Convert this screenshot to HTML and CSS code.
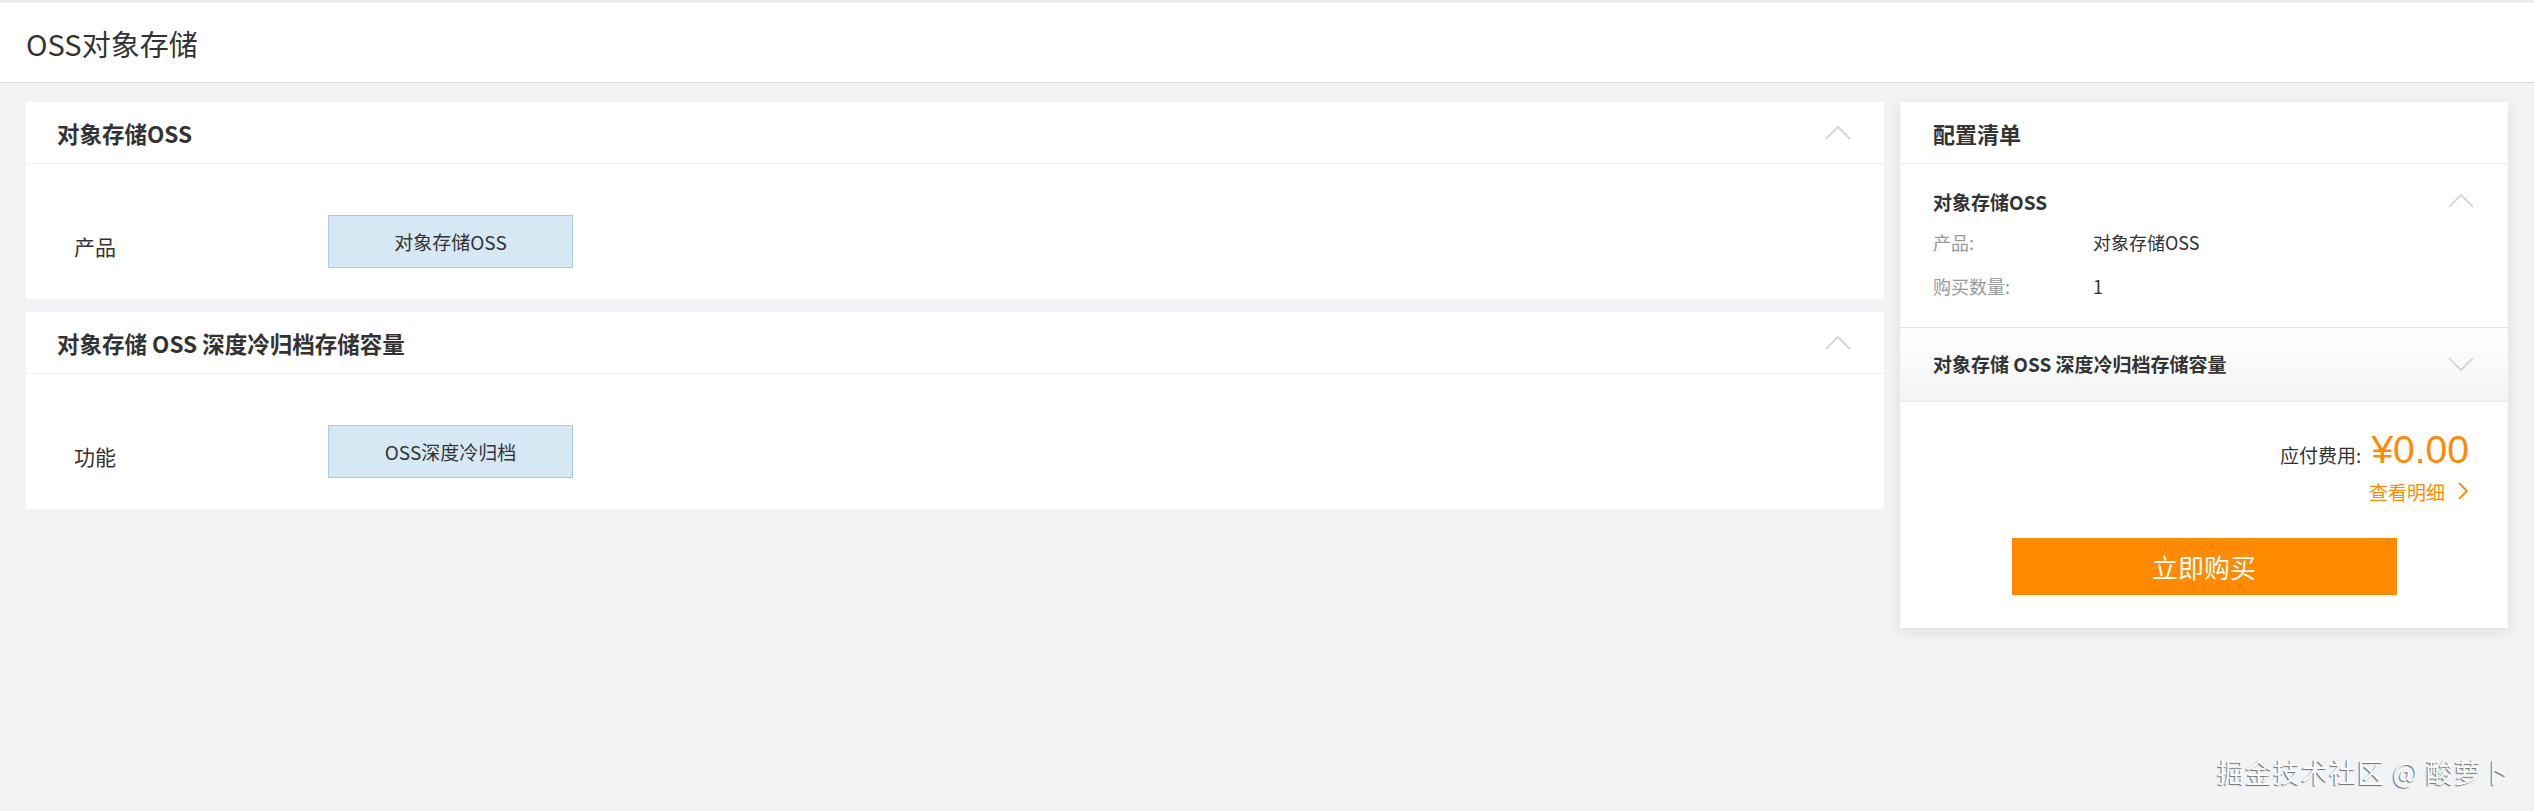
FILE: index.html
```html
<!DOCTYPE html>
<html lang="zh-CN">
<head>
  <meta charset="UTF-8" />
  <title>OSS对象存储</title>
  <link rel="stylesheet" href="styles.css">
</head>
<body>
  <header class="page-header">
    <h1>OSS对象存储</h1>
  </header>

  <div class="main">
    <div class="config">
      <section class="card">
        <div class="card-head">
          <h2>对象存储OSS</h2>
          <svg class="chevron" width="28" height="16" viewBox="0 0 28 16"><polyline points="2,14 14,2 26,14" /></svg>
        </div>
        <div class="card-body">
          <div class="field">
            <span class="field-label">产品</span>
            <span class="chip">对象存储OSS</span>
          </div>
        </div>
      </section>

      <section class="card">
        <div class="card-head">
          <h2>对象存储 OSS 深度冷归档存储容量</h2>
          <svg class="chevron" width="28" height="16" viewBox="0 0 28 16"><polyline points="2,14 14,2 26,14" /></svg>
        </div>
        <div class="card-body">
          <div class="field">
            <span class="field-label">功能</span>
            <span class="chip">OSS深度冷归档</span>
          </div>
        </div>
      </section>
    </div>

    <aside class="summary">
      <div class="summary-head">配置清单</div>

      <div class="summary-item">
        <div class="item-title">
          <span>对象存储OSS</span>
          <svg class="chevron" width="28" height="16" viewBox="0 0 28 16"><polyline points="2,14 14,2 26,14" /></svg>
        </div>
        <div class="item-row"><span class="row-label">产品:</span><span>对象存储OSS</span></div>
        <div class="item-row"><span class="row-label">购买数量:</span><span>1</span></div>
      </div>

      <div class="summary-item collapsed">
        <div class="item-title">
          <span>对象存储 OSS 深度冷归档存储容量</span>
          <svg class="chevron" width="28" height="16" viewBox="0 0 28 16"><polyline points="2,2 14,14 26,2" /></svg>
        </div>
      </div>

      <div class="summary-foot">
        <div class="price-line">
          <span class="price-label">应付费用:</span>
          <span class="price">¥0.00</span>
        </div>
        <a class="detail-link" href="#">查看明细
          <svg width="12" height="20" viewBox="0 0 12 20"><polyline points="2,2 10,10 2,18" /></svg>
        </a>
        <button class="buy-btn">立即购买</button>
      </div>
    </aside>
  </div>

  <div class="watermark">掘金技术社区 @ 酸萝卜</div>
</body>
</html>
```

FILE: styles.css
```css
* {
  margin: 0;
  padding: 0;
  box-sizing: border-box;
}

html, body {
  height: 100%;
}

body {
  position: relative;
  background: #f2f3f5;
  color: #333;
  font-family: "Noto Sans CJK SC", "Liberation Sans", sans-serif;
  border-top: 3px solid #ececec;
}

.page-header {
  height: 80px;
  background: #fff;
  border-bottom: 1px solid #dcdee0;
  display: flex;
  align-items: center;
  padding-left: 26px;
}

.page-header h1 {
  font-size: 29px;
  font-weight: 400;
  color: #333;
}

.main {
  display: flex;
  align-items: flex-start;
  gap: 16px;
  padding: 19px 26px 0;
}

.config {
  flex: 1;
  display: flex;
  flex-direction: column;
  gap: 13px;
}

.card {
  background: #fff;
}

.card-head {
  height: 62px;
  display: flex;
  align-items: center;
  justify-content: space-between;
  padding: 0 32px 0 31px;
  border-bottom: 1px solid #eeeff0;
}

.card-head h2 {
  font-size: 22.5px;
  font-weight: 700;
  color: #333;
}

.chevron {
  fill: none;
  stroke: #cfcfcf;
  stroke-width: 1.6;
}

.card-body {
  height: 135px;
  padding: 51px 0 0 48px;
}

.field {
  display: flex;
  align-items: center;
}

.field-label {
  width: 254px;
  font-size: 21px;
  color: #333;
  padding-top: 8px;
}

.chip {
  width: 245px;
  height: 53px;
  display: flex;
  align-items: center;
  justify-content: center;
  background: #d7e8f5;
  border: 1px solid #a9cbe6;
  font-size: 19px;
  color: #333;
}

.summary {
  width: 608px;
  background: #fff;
  box-shadow: 0 3px 12px rgba(0, 0, 0, 0.1);
}

.summary-head {
  height: 62px;
  display: flex;
  align-items: center;
  padding-left: 33px;
  font-size: 22px;
  font-weight: 700;
  border-bottom: 1px solid #eeeff0;
}

.summary-item {
  padding: 22px 33px 19px;
  border-bottom: 1px solid #e6e7e8;
}

.summary-item.collapsed {
  height: 74px;
  padding: 0 33px 2px;
  display: flex;
  flex-direction: column;
  justify-content: center;
  background: linear-gradient(#fff, #f3f4f5);
}

.item-title {
  height: 30px;
  display: flex;
  align-items: center;
  justify-content: space-between;
  font-size: 19px;
  font-weight: 700;
}

.item-row {
  height: 44px;
  display: flex;
  align-items: center;
  font-size: 18px;
  color: #333;
}

.item-title + .item-row {
  margin-top: 4px;
}

.row-label {
  width: 160px;
  color: #999;
}

.summary-foot {
  padding: 26px 39px 33px;
  display: flex;
  flex-direction: column;
  align-items: flex-end;
}

.price-line {
  height: 44px;
  display: flex;
  align-items: center;
  gap: 10px;
}

.price-label {
  font-size: 19px;
  color: #333;
  padding-top: 8px;
}

.price {
  font-size: 39px;
  color: #ff8a00;
  font-family: "Liberation Sans", sans-serif;
}

.detail-link {
  height: 30px;
  margin-top: 4px;
  display: flex;
  align-items: center;
  gap: 12px;
  font-size: 19px;
  color: #ff8a00;
  text-decoration: none;
}

.detail-link svg {
  fill: none;
  stroke: #ff8a00;
  stroke-width: 1.8;
}

.buy-btn {
  align-self: center;
  width: 385px;
  height: 57px;
  margin-top: 32px;
  background: #ff8a00;
  border: none;
  color: #fff;
  font-family: inherit;
  font-size: 26px;
  cursor: pointer;
}

.watermark {
  position: absolute;
  right: 24px;
  bottom: 20px;
  font-size: 27px;
  color: #fbfbfb;
  text-shadow: -1px 1px 1px #6d6d6d;
  letter-spacing: 1px;
}
```
